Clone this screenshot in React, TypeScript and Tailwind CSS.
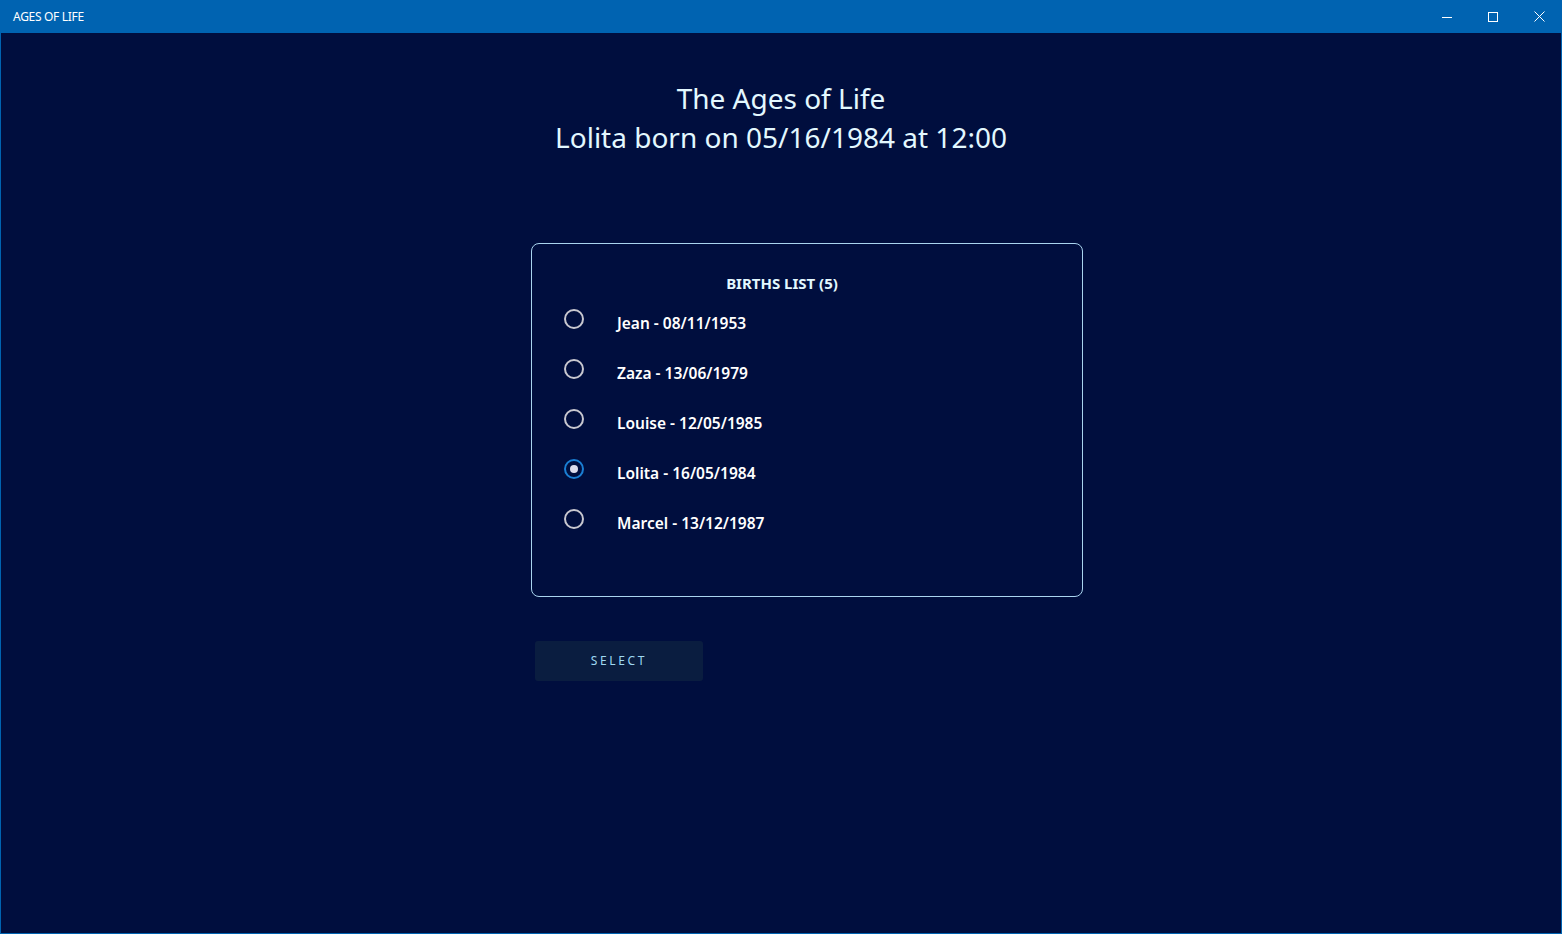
import React, { useState } from 'react';

interface Birth {
  name: string;
  date: string;
}

const births: Birth[] = [
  { name: 'Jean', date: '08/11/1953' },
  { name: 'Zaza', date: '13/06/1979' },
  { name: 'Louise', date: '12/05/1985' },
  { name: 'Lolita', date: '16/05/1984' },
  { name: 'Marcel', date: '13/12/1987' },
];

const font = { fontFamily: '"Noto Sans", "Open Sans", sans-serif' };

export default function App() {
  const [selected, setSelected] = useState(3);

  return (
    <div className="w-[1562px] h-[934px] flex flex-col bg-[#0063b1] overflow-hidden" style={font}>
      {/* title bar */}
      <div className="h-[33px] flex items-center justify-between text-white shrink-0">
        <span className="pl-[13px] text-[12px] tracking-tight">AGES OF LIFE</span>
        <div className="flex h-full">
          <button className="w-[46px] h-full flex items-center justify-center">
            <svg width="10" height="10" viewBox="0 0 10 10"><path d="M0 5.5h10" stroke="white" strokeWidth="1" /></svg>
          </button>
          <button className="w-[46px] h-full flex items-center justify-center">
            <svg width="10" height="10" viewBox="0 0 10 10"><rect x="0.5" y="0.5" width="9" height="9" fill="none" stroke="white" strokeWidth="1" /></svg>
          </button>
          <button className="w-[46px] h-full flex items-center justify-center">
            <svg width="11" height="11" viewBox="0 0 11 11"><path d="M0.5 0.5l10 10M10.5 0.5l-10 10" stroke="white" strokeWidth="1" /></svg>
          </button>
        </div>
      </div>

      {/* content */}
      <div className="flex-1 mx-px mb-px bg-[#000e3e] flex flex-col">
        <div className="pt-[46px] text-center text-[28px] leading-[39px] text-[#e3f8ff]">
          <div>The Ages of Life</div>
          <div>Lolita born on 05/16/1984 at 12:00</div>
        </div>

        <div className="ml-[530px] mt-[86px] w-[552px] h-[354px] border border-[#a9d4ef] rounded-[8px] pt-[29px]">
          <div className="text-center pr-[50px] text-[15px] font-bold text-[#e3f8ff] leading-[20px]">BIRTHS LIST (5)</div>
          <div className="flex flex-col mt-[15px]">
            {births.map((b, i) => (
              <label key={b.name} className="h-[50px] flex items-start cursor-pointer" onClick={() => setSelected(i)}>
                <span className="ml-[32px] mt-[1px] w-[20px] h-[20px] flex items-center justify-center">
                  {selected === i ? (
                    <span className="w-[20px] h-[20px] rounded-full border-[2px] border-[#1a7fd4] flex items-center justify-center">
                      <span className="w-[8px] h-[8px] rounded-full bg-[#dcdcec]" />
                    </span>
                  ) : (
                    <span className="w-[20px] h-[20px] rounded-full border-[2px] border-[#c8c8d0]" />
                  )}
                </span>
                <span className="ml-[33px] mt-[4px] text-[15.5px] font-semibold text-white leading-[22px]">
                  {b.name} - {b.date}
                </span>
              </label>
            ))}
          </div>
        </div>

        <button className="ml-[534px] mt-[44px] w-[168px] h-[40px] rounded-[3px] bg-[#0a1d40] text-[#9fd8f2] text-[12px] tracking-[0.22em] flex items-center justify-center">
          SELECT
        </button>
      </div>
    </div>
  );
}
